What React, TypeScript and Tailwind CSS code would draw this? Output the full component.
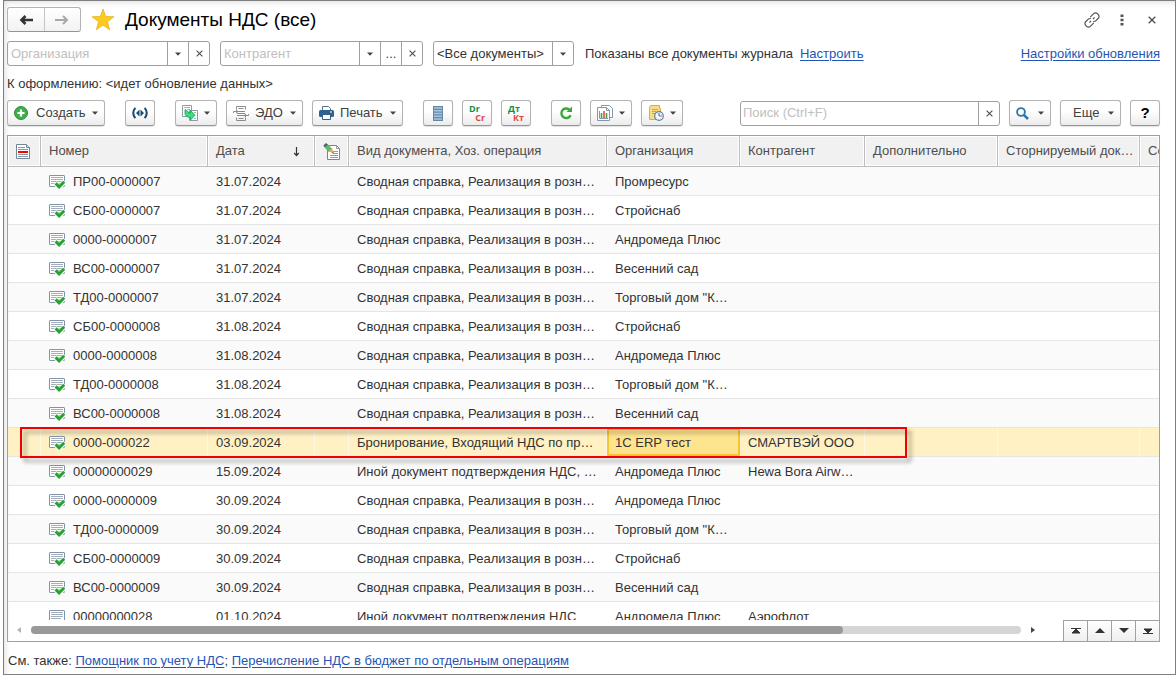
import clsx from "clsx";
import type { ReactNode } from "react";

type DocumentRow = {
	number: string;
	date: string;
	kind: string;
	organization: string;
	contractor?: string;
	posted?: boolean;
	selected?: boolean;
};

const SUMMARY = "Сводная справка, Реализация в розницу";
const OTHER = "Иной документ подтверждения НДС, Ввоз";

const rows: DocumentRow[] = [
	{ number: "ПР00-0000007", date: "31.07.2024", kind: SUMMARY, organization: "Промресурс", posted: true },
	{ number: "СБ00-0000007", date: "31.07.2024", kind: SUMMARY, organization: "Стройснаб", posted: true },
	{ number: "0000-0000007", date: "31.07.2024", kind: SUMMARY, organization: "Андромеда Плюс", posted: true },
	{ number: "ВС00-0000007", date: "31.07.2024", kind: SUMMARY, organization: "Весенний сад", posted: true },
	{ number: "ТД00-0000007", date: "31.07.2024", kind: SUMMARY, organization: 'Торговый дом "Комп"', posted: true },
	{ number: "СБ00-0000008", date: "31.08.2024", kind: SUMMARY, organization: "Стройснаб", posted: true },
	{ number: "0000-0000008", date: "31.08.2024", kind: SUMMARY, organization: "Андромеда Плюс", posted: true },
	{ number: "ТД00-0000008", date: "31.08.2024", kind: SUMMARY, organization: 'Торговый дом "Комп"', posted: true },
	{ number: "ВС00-0000008", date: "31.08.2024", kind: SUMMARY, organization: "Весенний сад", posted: true },
	{
		number: "0000-000022",
		date: "03.09.2024",
		kind: "Бронирование, Входящий НДС по приходу",
		organization: "1С ERP тест",
		contractor: "СМАРТВЭЙ ООО",
		posted: true,
		selected: true,
	},
	{
		number: "00000000029",
		date: "15.09.2024",
		kind: OTHER,
		organization: "Андромеда Плюс",
		contractor: "Hewa Bora Airways",
		posted: true,
	},
	{ number: "0000-0000009", date: "30.09.2024", kind: SUMMARY, organization: "Андромеда Плюс", posted: true },
	{ number: "ТД00-0000009", date: "30.09.2024", kind: SUMMARY, organization: 'Торговый дом "Комп"', posted: true },
	{ number: "СБ00-0000009", date: "30.09.2024", kind: SUMMARY, organization: "Стройснаб", posted: true },
	{ number: "ВС00-0000009", date: "30.09.2024", kind: SUMMARY, organization: "Весенний сад", posted: true },
	{
		number: "00000000028",
		date: "01.10.2024",
		kind: "Иной документ подтверждения НДС",
		organization: "Андромеда Плюс",
		contractor: "Аэрофлот",
	},
];

const Caret = () => (
	<svg width="6" height="4" viewBox="0 0 6 4" className="shrink-0" aria-hidden="true">
		<path d="M0 0.5h6L3 3.8z" fill="#444" />
	</svg>
);

const Cross = ({ size = 7 }: { size?: number }) => (
	<svg width={size} height={size} viewBox="0 0 7 7" aria-hidden="true">
		<path d="M0.6 0.6l5.8 5.8M6.4 0.6L0.6 6.4" stroke="#4d4d4d" strokeWidth="1.1" />
	</svg>
);

const ToolButton = ({
	label,
	className,
	children,
}: {
	label?: string;
	className: string;
	children: ReactNode;
}) => (
	<button
		type="button"
		aria-label={label}
		className={clsx(
			"flex h-[26px] shrink-0 items-center rounded-[3px] border border-[#b3b3b3] border-b-[#959595] bg-linear-to-b from-white from-40% to-[#ececec] text-[#404040] shadow-[0_1px_1px_rgba(0,0,0,0.12)]",
			className,
		)}
	>
		{children}
	</button>
);

const FieldButton = ({ label, children }: { label: string; children: ReactNode }) => (
	<button
		type="button"
		aria-label={label}
		className="flex w-[21px] shrink-0 items-center justify-center border-l border-[#a0a0a0] text-[#404040]"
	>
		{children}
	</button>
);

const DocumentIcon = ({ posted }: { posted?: boolean }) => (
	<svg width="16" height="14" viewBox="0 0 16 14" className="shrink-0" aria-hidden="true">
		<rect x="0.5" y="0.5" width="15" height="11" rx="0.5" fill="#fff" stroke="#8295a8" />
		<path d="M2 2.5h12M2 4.5h12M2 6.5h12M2 8.5h10" stroke="#a3afbb" />
		{posted && (
			<>
				<path d="M5.8 8l4.400 4.300L16 6.500" fill="none" stroke="#fff" strokeWidth="4.6" />
				<path d="M6.600 8.400l3.500 3.500L15.300 6.700" fill="none" stroke="#24a32f" strokeWidth="3" />
			</>
		)}
	</svg>
);

const MarkedDocumentIcon = () => (
	<svg width="14" height="15" viewBox="0 0 14 15" aria-hidden="true">
		<path d="M0.5 0.5h10l3 3v11H0.5z" fill="#fff" stroke="#73879b" />
		<path d="M10.5 0.5v3h3" fill="#dbe2e8" stroke="#73879b" />
		<path d="M2 3.5h7M2 5.5h10M2 10.5h10M2 12.5h10" stroke="#8c9cab" />
		<path d="M2 7h10v2H2z" fill="#f00" />
	</svg>
);

const PencilDocumentIcon = () => (
	<svg width="17" height="17" viewBox="0 0 17 17" aria-hidden="true">
		<path d="M4.5 2.5h9l3 3v11h-12z" fill="#fff" stroke="#73879b" />
		<path d="M13.5 2.5v3h3M10 8.5h5M10 10.5h5M7 12.5h8M7 14.5h8" fill="none" stroke="#8c9cab" />
		<path d="M4.5 1l4.700 4.700-3.700 3.200L1.500 4.200z" fill="#59bd69" />
		<path d="M0.3 2.5L3 0l1.900 1.400-3 3.200z" fill="#59616b" />
		<path d="M5.5 8.5l3.700-3.200 1.600 5z" fill="#eda956" />
		<path d="M9 10l1-1.200.8 1.800z" fill="#4f3a24" />
	</svg>
);

const StarIcon = () => (
	<svg width="24" height="23" viewBox="0 0 24 23" aria-hidden="true">
		<path
			d="M12 1l2.700 7.500 8.300.2-6.600 5.100 2.300 8L12 17.100l-6.700 4.700 2.300-8L1 8.700l8.300-.2z"
			fill="#fbcb1e"
			stroke="#e8b321"
			strokeWidth="0.8"
		/>
	</svg>
);

const ChainIcon = () => (
	<svg width="16" height="16" viewBox="0 0 16 16" fill="none" stroke="#555" strokeWidth="1.2" aria-hidden="true">
		<path d="M6.2 5.2l3.500-3.500a2.600 2.600 0 0 1 3.700 0l.9.900a2.600 2.600 0 0 1 0 3.700L12 8.600q-1.200 1.200-2.800.8" />
		<path d="M9.8 10.8l-3.500 3.500a2.600 2.600 0 0 1-3.700 0l-.9-.9a2.600 2.600 0 0 1 0-3.700L4 7.400q1.200-1.200 2.800-.8" />
		<path d="M5.4 10.6l1.600-1.600M9 7l1.600-1.600" />
	</svg>
);

const PlusIcon = () => (
	<svg width="14" height="14" viewBox="0 0 14 14" aria-hidden="true">
		<circle cx="7" cy="7" r="6.5" fill="#3fae4c" stroke="#2f8f42" />
		<path d="M7 3.5v7M3.5 7h7" stroke="#fff" strokeWidth="2.2" />
	</svg>
);

const ExchangeIcon = () => (
	<svg width="16" height="12" viewBox="0 0 16 12" aria-hidden="true">
		<path
			d="M3.3 0.8Q-0.8 6 3.3 11.2M12.7 0.8Q16.800 6 12.700 11.200"
			fill="none"
			stroke="#194a6e"
			strokeWidth="2"
		/>
		<path d="M7.5 2.500v7L4 6zM8.500 2.500v7L12 6z" fill="#194a6e" />
	</svg>
);

const CreateFromIcon = () => (
	<svg width="17" height="17" viewBox="0 0 17 17" aria-hidden="true">
		<path d="M0.5 0.5h9v11h-9z" fill="#fff" stroke="#8c9cab" />
		<path d="M2 2.5h6M5 4.5h3" stroke="#a3afbb" />
		<path d="M7.5 5.5h8v10h-8z" fill="#fff" stroke="#8c9cab" />
		<path d="M12 7.5h2M12 13.5h2" stroke="#a3afbb" />
		<path
			d="M3 4.500l3.500 2.500v1H8.500V5.500l4.500 4.700-4.500 4.800V12.500H7.500Q3 11.500 3 8z"
			fill="#36e07d"
			stroke="#159c54"
			strokeWidth="0.8"
		/>
	</svg>
);

const EdoIcon = () => (
	<svg width="16" height="15" viewBox="0 0 16 15" fill="none" stroke="#8b8b8b" aria-hidden="true">
		<path d="M3.5 3.5v-3h9v3M3.5 11.500v3h9v-3M5.500 2.500h5M5.500 12.500h5M5 5.500h7M4 7.500h8M4 9.500h7" />
		<path d="M0.5 7V5.500h3M15.500 8v1.500h-3" />
		<path d="M3 3.5l2.500 2L3 7.500zM13 7.500l-2.500 2 2.500 2z" fill="#8b8b8b" stroke="none" />
	</svg>
);

const PrinterIcon = () => (
	<svg width="15" height="14" viewBox="0 0 15 14" aria-hidden="true">
		<path d="M3.5 4.5v-4h6l2 2v2" fill="#fff" stroke="#55738f" />
		<rect x="0" y="4" width="15" height="7" rx="1.5" fill="#2f628e" />
		<path d="M3.5 8.5h8v5h-8z" fill="#fff" stroke="#2f628e" />
		<path d="M11 6h2" stroke="#fff" />
	</svg>
);

const ListIcon = () => (
	<svg width="10" height="15" viewBox="0 0 10 15" aria-hidden="true">
		<rect width="10" height="15" fill="#6488a8" />
		<path d="M1 2h8M1 4.700h8M1 7.500h8M1 10.200h8M1 13h8" stroke="#aac8df" strokeWidth="1.6" />
	</svg>
);

const RefreshIcon = () => (
	<svg width="14" height="14" viewBox="0 0 14 14" aria-hidden="true">
		<path d="M10.2 3.5A4.800 4.800 0 1 0 11.600 9.200" fill="none" stroke="#35a73b" strokeWidth="2.4" />
		<path d="M13 0.5V6H7.500z" fill="#35a73b" />
	</svg>
);

const ReportsIcon = () => (
	<svg width="16" height="16" viewBox="0 0 16 16" aria-hidden="true">
		<path d="M4.5 2.5v-2h8l3 3v9h-3" fill="#fff" stroke="#8597a8" />
		<path d="M0.5 2.5h9l3 3v10H0.500z" fill="#fff" stroke="#8597a8" />
		<path d="M9.5 2.5v3h3" fill="none" stroke="#8597a8" />
		<path d="M2.5 6v7.500H11" fill="none" stroke="#8597a8" />
		<path d="M4.5 8v5" stroke="#43a047" strokeWidth="1.6" />
		<path d="M7 6v7" stroke="#e14b3b" strokeWidth="1.6" />
		<path d="M9.5 8v5" stroke="#43a047" strokeWidth="1.6" />
	</svg>
);

const ScheduleIcon = () => (
	<svg width="16" height="16" viewBox="0 0 16 16" aria-hidden="true">
		<path d="M2.5 0.5h9v3h1v11h-11v-12z" fill="#fadc84" stroke="#d9ad48" />
		<path d="M4 4.5h6M4 6.5h4M4 8.500h3" stroke="#cfa449" />
		<circle cx="11" cy="11" r="4.3" fill="#fff" stroke="#4f83b3" strokeWidth="1.2" />
		<path d="M11 8v3" stroke="#345f88" />
		<path d="M11 11h3" stroke="#e14b3b" />
		<circle cx="11" cy="11" r="3" fill="none" stroke="#89a9c6" strokeWidth="0.6" strokeDasharray="1 1.35" />
	</svg>
);

const SearchIcon = () => (
	<svg width="13" height="13" viewBox="0 0 13 13" aria-hidden="true">
		<circle cx="5" cy="5" r="3.9" fill="none" stroke="#2f78ad" strokeWidth="1.9" />
		<path d="M7.8 7.8l4.200 4.200" stroke="#2f78ad" strokeWidth="2.6" />
	</svg>
);

const PostingIcon = ({ top, bottom }: { top: string; bottom: string }) => (
	<span className="flex w-4 flex-col font-['Open_Sans',sans-serif] text-[9px] leading-[9px] font-bold">
		<span className="self-start text-[#119147]">{top}</span>
		<span className="self-end text-[#dc4a3d]">{bottom}</span>
	</span>
);

const navigation = [
	{ label: "В начало", path: "M0 1.500h10M5 2l4 4H1z" },
	{ label: "Предыдущие", path: "M5 1l5 5H0z" },
	{ label: "Следующие", path: "M5 6l5-5H0z" },
	{ label: "В конец", path: "M0 6.500h10M5 6l4-4H1z" },
];

const headClass =
	"h-[31px] overflow-hidden border-r border-b border-[#bdbdbd] bg-[#f1f1f1] pr-1 pl-2 text-left font-normal whitespace-nowrap text-[#4d4d4d] shadow-[inset_0_0_0_1px_#fff]";

export default function App() {
	return (
		<div className="h-screen bg-white pl-[3px] font-['Liberation_Sans',Arial,sans-serif] text-[13px] leading-4 text-[#333]">
			<main className="flex h-full flex-col border border-[#7f7f7f] pt-1.5 pr-[15px] pl-[3px] shadow-[inset_4px_4px_6px_-3px_rgba(0,0,0,0.14)]">
				<header className="flex h-[25px] shrink-0 items-center">
					<div className="flex h-[25px] w-[74px] rounded-[3px] border border-[#b3b3b3] border-b-[#959595] bg-linear-to-b from-white to-[#f2f2f2]">
						<button type="button" aria-label="Назад" className="flex flex-1 items-center justify-center">
							<svg width="14" height="10" viewBox="0 0 14 10" aria-hidden="true">
								<path d="M14 5H3M6.500 1L2.500 5l4 4" fill="none" stroke="#333" strokeWidth="2.600" />
							</svg>
						</button>
						<button
							type="button"
							aria-label="Вперед"
							className="flex flex-1 items-center justify-center border-l border-[#c4c4c4]"
						>
							<svg width="14" height="10" viewBox="0 0 14 10" aria-hidden="true">
								<path d="M0 5h12M8 1l4 4-4 4" fill="none" stroke="#a8a8a8" strokeWidth="2" />
							</svg>
						</button>
					</div>
					<button type="button" aria-label="В избранное" className="ml-2.5">
						<StarIcon />
					</button>
					<h1 className="ml-2.5 text-[19px] leading-6 text-black">Документы НДС (все)</h1>
					<div className="ml-auto flex items-center">
						<button type="button" aria-label="Получить ссылку">
							<ChainIcon />
						</button>
						<button type="button" aria-label="Меню" className="ml-5">
							<svg width="4" height="12" viewBox="0 0 4 12" fill="#555" aria-hidden="true">
								<path d="M0.500 0.500h3v2.500h-3zM0.500 4.750h3v2.500h-3zM0.500 9h3v2.500h-3z" />
							</svg>
						</button>
						<button type="button" aria-label="Закрыть" className="mr-1 ml-6">
							<Cross size={8} />
						</button>
					</div>
				</header>

				<div className="mt-[9px] flex h-[25px] shrink-0 items-center">
					<div className="flex h-full w-[203px] rounded-[3px] border border-[#a0a0a0]">
						<input
							aria-label="Организация"
							placeholder="Организация"
							className="min-w-0 flex-1 px-[3px] outline-none placeholder:text-[#c0c0c0]"
						/>
						<FieldButton label="Выбрать организацию">
							<Caret />
						</FieldButton>
						<FieldButton label="Очистить организацию">
							<Cross />
						</FieldButton>
					</div>
					<div className="ml-2.5 flex h-full w-[203px] rounded-[3px] border border-[#a0a0a0]">
						<input
							aria-label="Контрагент"
							placeholder="Контрагент"
							className="min-w-0 flex-1 px-[3px] outline-none placeholder:text-[#c0c0c0]"
						/>
						<FieldButton label="Выбрать контрагента">
							<Caret />
						</FieldButton>
						<FieldButton label="Показать все">...</FieldButton>
						<FieldButton label="Очистить контрагента">
							<Cross />
						</FieldButton>
					</div>
					<div className="relative ml-2.5 h-full w-[141px] rounded-[3px] border border-[#a0a0a0]">
						<select aria-label="Вид документов" className="h-full w-full appearance-none pr-5 pl-[3px] outline-none">
							<option>&lt;Все документы&gt;</option>
						</select>
						<span className="pointer-events-none absolute inset-y-0 right-0 flex w-[21px] items-center justify-center border-l border-[#a0a0a0]">
							<Caret />
						</span>
					</div>
					<span className="ml-[11px]">Показаны все документы журнала</span>
					<a href="#configure" className="ml-[7px] text-[#1f55b5] underline underline-offset-2">
						Настроить
					</a>
					<a href="#update-settings" className="ml-auto text-[#1f55b5] underline underline-offset-2">
						Настройки обновления
					</a>
				</div>

				<p className="flex h-[34px] shrink-0 items-center pt-0.5">К оформлению: &lt;идет обновление данных&gt;</p>

				<div className="flex shrink-0 items-center gap-[9px]">
					<ToolButton className="w-[98px] px-1.5">
						<PlusIcon />
						<span className="ml-2">Создать</span>
						<span className="ml-auto">
							<Caret />
						</span>
					</ToolButton>
					<ToolButton label="Обмен" className="mx-[11px] w-[30px] justify-center">
						<ExchangeIcon />
					</ToolButton>
					<ToolButton label="Создать на основании" className="w-[42px] justify-between px-1.5">
						<CreateFromIcon />
						<Caret />
					</ToolButton>
					<ToolButton className="w-[77px] px-1.5">
						<EdoIcon />
						<span className="ml-1.5">ЭДО</span>
						<span className="ml-auto">
							<Caret />
						</span>
					</ToolButton>
					<ToolButton className="w-[91px] px-1.5">
						<PrinterIcon />
						<span className="ml-1.5">Печать</span>
						<span className="ml-auto">
							<Caret />
						</span>
					</ToolButton>
					<ToolButton label="Реестр документов" className="ml-[11px] w-[30px] justify-center">
						<ListIcon />
					</ToolButton>
					<ToolButton className="w-[30px] justify-center">
						<PostingIcon top="Dr" bottom="Cr" />
					</ToolButton>
					<ToolButton className="w-[30px] justify-center">
						<PostingIcon top="Дт" bottom="Кт" />
					</ToolButton>
					<ToolButton label="Обновить" className="ml-[11px] w-[30px] justify-center">
						<RefreshIcon />
					</ToolButton>
					<ToolButton label="Отчеты" className="w-[42px] justify-between px-1.5">
						<ReportsIcon />
						<Caret />
					</ToolButton>
					<ToolButton label="Напоминания" className="w-[42px] justify-between px-1.5">
						<ScheduleIcon />
						<Caret />
					</ToolButton>
					<div className="ml-auto flex h-[25px] w-[260px] rounded-[3px] border border-[#a0a0a0]">
						<input
							aria-label="Поиск"
							placeholder="Поиск (Ctrl+F)"
							className="min-w-0 flex-1 px-0.5 outline-none placeholder:text-[#c0c0c0]"
						/>
						<FieldButton label="Очистить поиск">
							<Cross />
						</FieldButton>
					</div>
					<ToolButton label="Найти" className="w-[42px] justify-between px-1.5">
						<SearchIcon />
						<Caret />
					</ToolButton>
					<ToolButton className="w-[61px] justify-between pr-1.5 pl-3">
						Еще
						<Caret />
					</ToolButton>
					<ToolButton className="w-[30px] justify-center text-[15px] font-bold text-black">?</ToolButton>
				</div>

				<section className="mt-[9px] flex min-h-0 flex-1 flex-col border border-[#a0a0a0]">
					<div className="relative min-h-0 flex-1 overflow-hidden">
						<table className="w-full table-fixed border-separate border-spacing-0">
							<colgroup>
								<col className="w-[33px]" />
								<col className="w-[167px]" />
								<col className="w-[107px]" />
								<col className="w-[34px]" />
								<col className="w-[258px]" />
								<col className="w-[133px]" />
								<col className="w-[125px]" />
								<col className="w-[133px]" />
								<col className="w-[142px]" />
								<col />
							</colgroup>
							<thead>
								<tr>
									<th aria-label="Состояние" className={headClass}>
										<MarkedDocumentIcon />
									</th>
									<th className={headClass}>Номер</th>
									<th className={headClass}>
										<span className="flex items-center justify-between pr-2.5">
											Дата
											<svg width="7" height="11" viewBox="0 0 7 11" aria-hidden="true">
												<path d="M3.500 1v8.500M1.200 7l2.300 2.600L5.800 7" fill="none" stroke="#333" strokeWidth="1.200" />
											</svg>
										</span>
									</th>
									<th aria-label="Исправление" className={headClass}>
										<PencilDocumentIcon />
									</th>
									<th className={headClass}>Вид документа, Хоз. операция</th>
									<th className={headClass}>Организация</th>
									<th className={headClass}>Контрагент</th>
									<th className={headClass}>Дополнительно</th>
									<th className={clsx(headClass, "text-ellipsis")}>Сторнируемый документ</th>
									<th className={clsx(headClass, "border-r-0")}>Ссылка</th>
								</tr>
							</thead>
							<tbody>
								{rows.map((row) => {
									const base = "h-[29px] truncate border-b border-b-[#e5e5e5] px-2 pt-0.5";
									const cell = clsx(
										base,
										row.selected && "border-r border-r-[#fff8e0] bg-[#fff1c4] last:border-r-0",
									);
									return (
										<tr key={row.number} className="odd:bg-[#fafafa]">
											<td className={cell} />
											<td className={cell}>
												<span className="flex items-center gap-2">
													<DocumentIcon posted={row.posted} />
													{row.number}
												</span>
											</td>
											<td className={cell}>{row.date}</td>
											<td className={cell} />
											<td className={cell}>{row.kind}</td>
											<td
												className={
													row.selected
														? clsx(base, "bg-[#ffe48f] shadow-[inset_0_0_0_2px_#f7c52d]")
														: cell
												}
											>
												{row.organization}
											</td>
											<td className={cell}>{row.contractor}</td>
											<td className={cell} />
											<td className={cell} />
											<td className={cell} />
										</tr>
									);
								})}
							</tbody>
						</table>
						{/* highlight frame over the selected document */}
						<div className="pointer-events-none absolute top-[291px] left-3 h-[31px] w-[887px] border-2 border-[#f00000] drop-shadow-[4px_4px_2px_rgba(0,0,0,0.4)]" />
					</div>
					<div className="flex h-[21px] shrink-0">
						<div className="flex flex-1 items-center pb-0.5 pl-[9px]">
							<button type="button" aria-label="Влево">
								<svg width="4" height="6" viewBox="0 0 4 6" aria-hidden="true">
									<path d="M4 0v6L0 3z" fill="#b5b5b5" />
								</svg>
							</button>
							<div className="mx-2.5 h-2 flex-1 rounded-full bg-[#d5d5d5]">
								<div className="h-2 w-[82%] rounded-full bg-[#999]" />
							</div>
							<button type="button" aria-label="Вправо" className="mr-7">
								<svg width="4" height="6" viewBox="0 0 4 6" aria-hidden="true">
									<path d="M0 0v6l4-3z" fill="#444" />
								</svg>
							</button>
						</div>
						{navigation.map((item) => (
							<button
								key={item.label}
								type="button"
								aria-label={item.label}
								className="flex w-6 items-center justify-center border-t border-l border-[#a0a0a0] bg-linear-to-b from-white to-[#efefef]"
							>
								<svg width="10" height="8" viewBox="0 0 10 8" aria-hidden="true">
									<path
										d={item.path}
										fill="#333"
										stroke={item.path.includes("h10") ? "#333" : "none"}
									/>
								</svg>
							</button>
						))}
					</div>
				</section>

				<footer className="flex h-8 shrink-0 items-center pt-1.5 pl-px">
					<p>
						См. также:{" "}
						<a href="#assistant" className="text-[#1f55b5] underline underline-offset-2">
							Помощник по учету НДС
						</a>
						;{" "}
						<a href="#transfer" className="text-[#1f55b5] underline underline-offset-2">
							Перечисление НДС в бюджет по отдельным операциям
						</a>
					</p>
				</footer>
			</main>
		</div>
	);
}
